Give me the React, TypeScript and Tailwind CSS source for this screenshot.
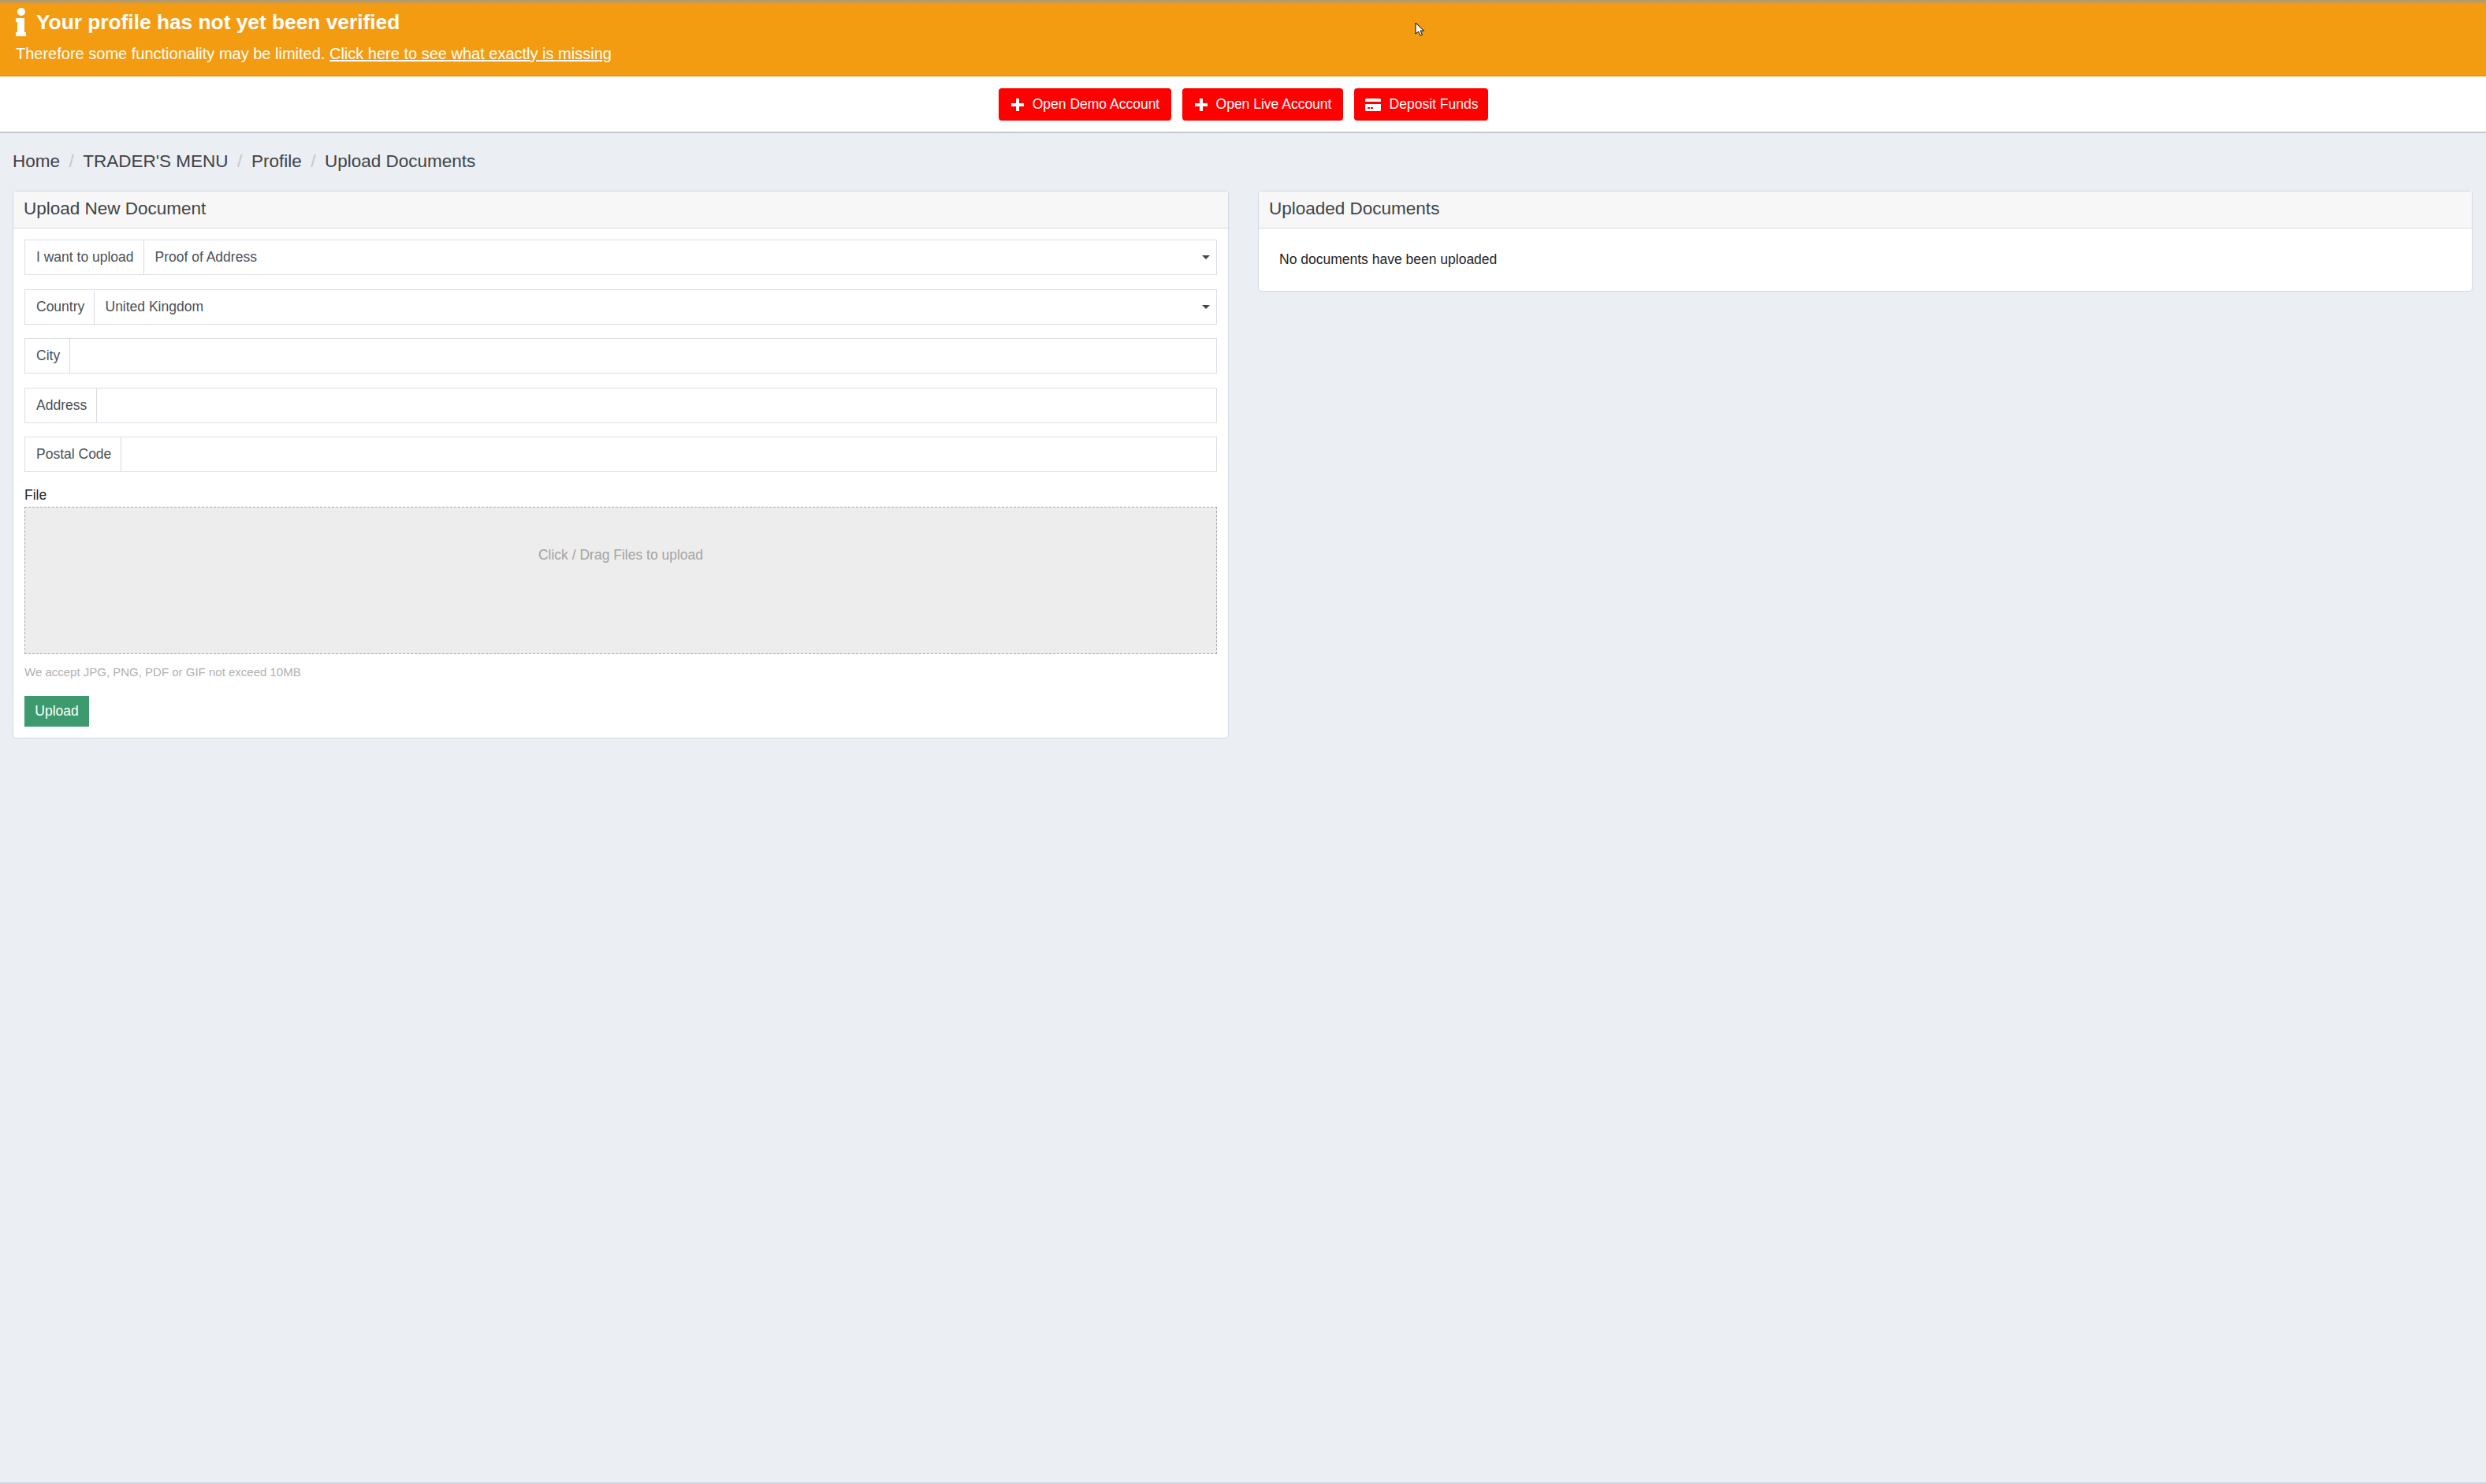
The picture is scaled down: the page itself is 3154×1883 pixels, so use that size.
const font = "font-['Liberation_Sans',Arial,sans-serif]"

function InfoGlyph() {
  return (
    <svg viewBox="0 0 14 36" className="h-[36px] w-[14px] fill-white">
      <circle cx="7" cy="5" r="5" />
      <path d="M1 13h10v18h2v5H0v-5h2V18H0v-5z" />
    </svg>
  )
}

function PlusGlyph() {
  return (
    <svg viewBox="0 0 16 16" className="size-[16px] fill-white">
      <path d="M6 0h4v6h6v4h-6v6H6v-6H0V6h6z" />
    </svg>
  )
}

function CardGlyph() {
  return (
    <svg viewBox="0 0 20 16" className="h-[16px] w-[20px] fill-white">
      <path d="M1.5 0h17A1.5 1.5 0 0 1 20 1.500V4H0V1.500A1.500 1.500 0 0 1 1.500 0z" />
      <path
        fillRule="evenodd"
        d="M0 7h20v7.500a1.500 1.500 0 0 1-1.500 1.500h-17A1.500 1.500 0 0 1 0 14.500zM3 11v2h3v-2zm4 0v2h3v-2z"
      />
    </svg>
  )
}

function ActionButton({ icon, label, width }: { icon: React.ReactNode; label: string; width: string }) {
  return (
    <button className={`flex h-[41px] items-center justify-center gap-[11px] rounded-[4px] bg-[#ff0000] pl-[2px] pt-[1px] text-[17.5px] text-white ${width}`}>
      {icon}
      {label}
    </button>
  )
}

function Field({ label, labelWidth, value, select }: { label: string; labelWidth: string; value?: string; select?: boolean }) {
  return (
    <div className="flex h-[45px] border border-[#dcdfe6] bg-white text-[17.5px] text-[#495057]">
      <div className={`flex shrink-0 items-center border-r border-[#d8dbe6] pl-[14px] ${labelWidth}`}>{label}</div>
      <div className="flex flex-1 items-center justify-between pl-[13.500px] pr-[8px]">
        <span>{value}</span>
        {select ? <span className="size-0 border-x-[5px] border-t-[5px] border-x-transparent border-t-[#444444]" /> : null}
      </div>
    </div>
  )
}

function Card({ title, children, className }: { title: string; children: React.ReactNode; className?: string }) {
  return (
    <section className={`rounded-[4px] border border-[#d3d8e3] bg-white ${className ?? ''}`}>
      <h2 className="flex h-[47px] items-center border-b border-[#d8dbe3] bg-[#f7f7f7] pb-[2px] pl-[13px] text-[22.5px] font-normal text-[#3f4347]">
        {title}
      </h2>
      {children}
    </section>
  )
}

export default function App() {
  return (
    <div className={`relative flex min-h-[1883px] flex-col border-b-2 border-[#cfd4dc] bg-[#ebeef3] ${font}`}>
      <header className="flex h-[97px] flex-col border-b border-[#e08e0b] bg-[linear-gradient(#a99a7c,#f39c12_6px)] pl-[20px] text-white">
        <div className="mt-[10px] flex h-[36px] items-center gap-[12px] text-[26.3px] font-bold">
          <InfoGlyph />
          <span className="pt-[1px]">Your profile has not yet been verified</span>
        </div>
        <p className="mt-[11px] text-[20px] leading-[22px]">
          Therefore some functionality may be limited.{' '}
          <a className="underline">Click here to see what exactly is missing</a>
        </p>
      </header>

      <nav className="flex h-[72px] items-center justify-center gap-[14px] border-b-2 border-[#c5c8cc] bg-white">
        <ActionButton icon={<PlusGlyph />} label="Open Demo Account" width="w-[219px]" />
        <ActionButton icon={<PlusGlyph />} label="Open Live Account" width="w-[204px]" />
        <ActionButton icon={<CardGlyph />} label="Deposit Funds" width="w-[170px]" />
      </nav>

      <ol className="mt-[21px] flex h-[30px] items-center pl-[16px] text-[22.5px] text-[#3f4347]">
        <li>Home</li>
        <li className="px-[11.500px] text-[#c5c8cc]">/</li>
        <li>TRADER'S MENU</li>
        <li className="px-[11.500px] text-[#c5c8cc]">/</li>
        <li>Profile</li>
        <li className="px-[11.500px] text-[#c5c8cc]">/</li>
        <li>Upload Documents</li>
      </ol>

      <main className="mt-[22px] grid grid-cols-[1543px_1541px] items-start gap-[37px] pl-[16px]">
        <Card title="Upload New Document">
          <div className="px-[14px] pb-[14px] pt-[14px]">
            <div className="flex flex-col gap-[17.500px]">
              <Field label="I want to upload" labelWidth="w-[151px]" value="Proof of Address" select />
              <Field label="Country" labelWidth="w-[88px]" value="United Kingdom" select />
              <Field label="City" labelWidth="w-[57px]" />
              <Field label="Address" labelWidth="w-[91px]" />
              <Field label="Postal Code" labelWidth="w-[122px]" />
            </div>
            <label className="mb-[2px] mt-[16px] block text-[17.5px] leading-[26px] text-[#212529]">File</label>
            <div className="flex h-[187px] justify-center border border-dashed border-[#aaaaaa] bg-[#ededed] pt-[47px] text-[17.5px] text-[#a3a3a3]">
              Click / Drag Files to upload
            </div>
            <p className="mt-[13px] text-[15px] leading-[20px] text-[#b0b0b0]">We accept JPG, PNG, PDF or GIF not exceed 10MB</p>
            <button className="mt-[20px] block h-[39px] w-[82px] bg-[#3c9a6e] pb-[1px] text-[17.5px] text-white">Upload</button>
          </div>
        </Card>

        <Card title="Uploaded Documents">
          <p className="flex h-[79px] items-center pl-[26px] text-[17.5px] text-[#212529]">No documents have been uploaded</p>
        </Card>
      </main>

      {/* pointer caught in the capture */}
      <svg viewBox="0 0 12 18" className="absolute left-[1795px] top-[28px] h-[18px] w-[12px]">
        <path d="M1 1v14l3.500-3 2.500 5 2.500-1-2.500-5h4.500z" fill="#ffffff" stroke="#000000" strokeWidth="1" />
      </svg>
    </div>
  )
}
